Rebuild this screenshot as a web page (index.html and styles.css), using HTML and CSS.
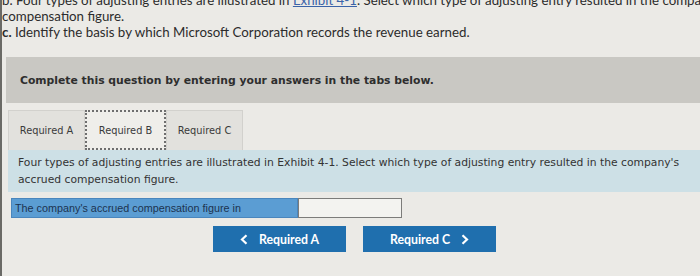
FILE: index.html
```html
<!DOCTYPE html>
<html>
<head>
<meta charset="utf-8">
<link rel="stylesheet" href="styles.css">
</head>
<body>
<div class="page">
  <div class="intro">
    <p class="line">b. Four types of adjusting entries are illustrated in <span class="link">Exhibit 4-1</span>. Select which type of adjusting entry resulted in the company's</p>
    <p class="line">compensation figure.</p>
    <p class="line"><b>c.</b> Identify the basis by which Microsoft Corporation records the revenue earned.</p>
  </div>
  <div class="banner">Complete this question by entering your answers in the tabs below.</div>
  <div class="tabs">
    <div class="tab">Required A</div>
    <div class="tab active">Required B</div>
    <div class="tab">Required C</div>
  </div>
  <div class="panel">Four types of adjusting entries are illustrated in Exhibit 4-1. Select which type of adjusting entry resulted in the company's accrued compensation figure.</div>
  <div class="answer">
    <div class="label">The company's accrued compensation figure in</div>
    <div class="input"></div>
  </div>
  <div class="nav">
    <div class="btn prev"><svg class="chev" width="8" height="11" viewBox="0 0 8 11"><polyline points="6.5,1.2 2,5.5 6.5,9.8" fill="none" stroke="#fff" stroke-width="2.2"/></svg>Required A</div>
    <div class="btn next">Required C<svg class="chev" width="8" height="11" viewBox="0 0 8 11"><polyline points="1.5,1.2 6,5.5 1.5,9.8" fill="none" stroke="#fff" stroke-width="2.2"/></svg></div>
  </div>
</div>
</body>
</html>
```
FILE: styles.css
```css
html, body { margin: 0; padding: 0; }
body {
  width: 700px;
  height: 276px;
  overflow: hidden;
  background: #ebeae6;
}
.page {
  height: 276px;
  border-left: 2px solid #6a6a66;
  box-sizing: border-box;
  overflow: hidden;
}
.intro {
  margin-top: -8px;
  font-family: Lato, sans-serif;
  font-size: 13.3px;
  color: #2c2c2c;
}
.line { margin: 0; line-height: 16px; white-space: nowrap; }
.link { color: #3a63a8; text-decoration: underline; }
.banner {
  margin: 17px 0 0 4px;
  height: 46px;
  background: #c9c8c3;
  display: flex;
  align-items: center;
  padding-left: 14px;
  font-family: "DejaVu Sans", sans-serif;
  font-weight: bold;
  font-size: 10.8px;
  color: #2e2e2e;
}
.tabs {
  margin: 7px 0 0 6px;
  display: flex;
  height: 40px;
}
.tab {
  width: 77px;
  box-sizing: border-box;
  display: flex;
  align-items: center;
  justify-content: center;
  background: #e2e1dd;
  border: 1px solid #d2d1cd;
  border-bottom: none;
  font-family: "DejaVu Sans", sans-serif;
  font-size: 9.8px;
  color: #3a3a3a;
}
.tab.active {
  width: 81px;
  background: #efeeea;
  border: 2px dotted #6e6e6e;
}
.panel {
  margin-left: 6px;
  background: #cde0e6;
  padding: 4px 10px 4px 10px;
  height: 42px;
  box-sizing: border-box;
  font-family: "DejaVu Sans", sans-serif;
  font-size: 10.75px;
  line-height: 17px;
  color: #333;
}
.answer {
  margin: 6px 0 0 9px;
  display: flex;
  height: 20px;
}
.label {
  width: 287px;
  box-sizing: border-box;
  background: #5b9dd3;
  border: 1px solid #4a86bd;
  padding-left: 3px;
  display: flex;
  align-items: center;
  font-family: "Liberation Sans", sans-serif;
  font-size: 10.8px;
  color: #1c3350;
}
.input {
  width: 104px;
  box-sizing: border-box;
  background: #f3f3f0;
  border: 1px solid #7c7c7a;
}
.nav {
  margin: 8px 0 0 211px;
  display: flex;
  gap: 17px;
}
.btn {
  width: 133px;
  height: 26px;
  background: #1f6fae;
  color: #fff;
  display: flex;
  align-items: center;
  justify-content: center;
  font-family: Lato, sans-serif;
  font-weight: bold;
  font-size: 12.3px;
}
.prev .chev { margin-right: 11px; }
.next .chev { margin-left: 11px; }
```
